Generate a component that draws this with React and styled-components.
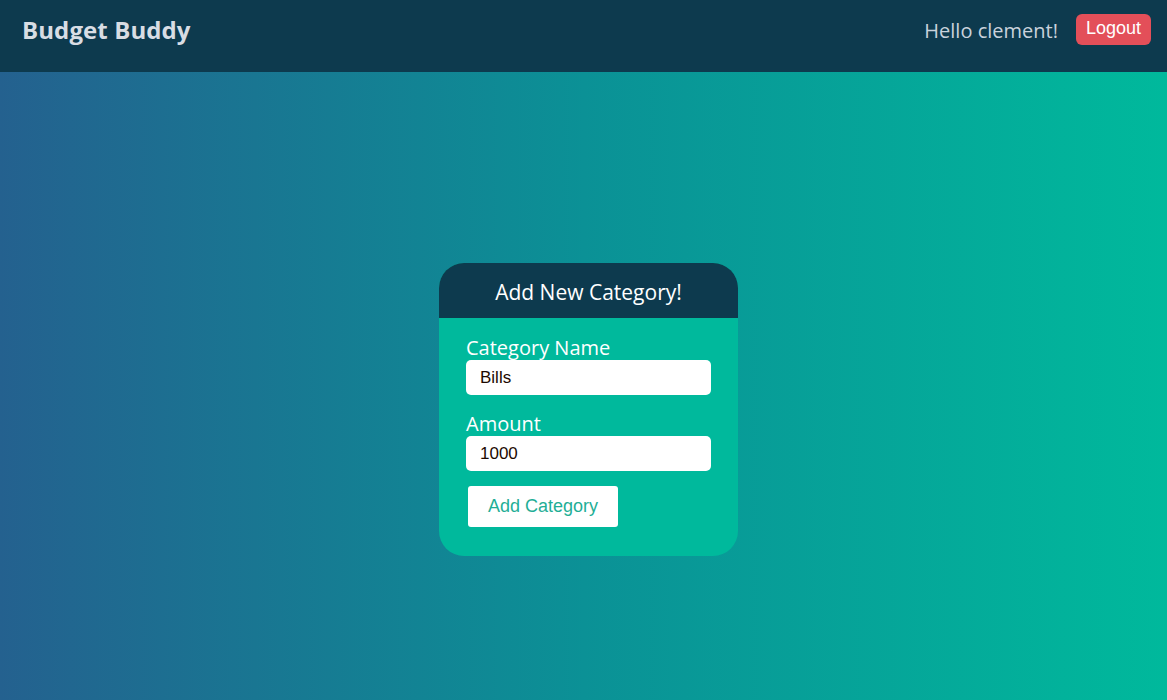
import React from 'react';
import styled, { createGlobalStyle } from 'styled-components';

const GlobalStyle = createGlobalStyle`
  html, body, #root {
    margin: 0;
    height: 100%;
  }
  body {
    font-family: 'Open Sans', 'Noto Sans', sans-serif;
  }
`;

const Page = styled.div`
  display: flex;
  flex-direction: column;
  height: 100%;
`;

const NavBar = styled.nav`
  height: 72px;
  flex-shrink: 0;
  background-color: #0d3a4e;
  display: flex;
  align-items: center;
  justify-content: space-between;
  padding: 0 16px 0 22px;
`;

const Brand = styled.h1`
  margin: 0 0 13px 0;
  font-size: 24px;
  font-weight: 700;
  color: #d8dde4;
  letter-spacing: 0.1px;
`;

const UserArea = styled.div`
  display: flex;
  align-items: center;
  gap: 18px;
  margin-bottom: 13px;
`;

const Greeting = styled.span`
  font-size: 20px;
  color: #c9d2dc;
  margin-top: 2px;
`;

const LogoutButton = styled.button`
  background-color: #e34f59;
  color: #ffffff;
  border: none;
  border-radius: 6px;
  padding: 4px 10px 6px;
  font-family: 'Liberation Sans', Arial, sans-serif;
  font-size: 18px;
  cursor: pointer;
`;

const Main = styled.main`
  flex: 1;
  background: linear-gradient(90deg, #24618f 0%, #0b9196 50%, #00b99c 100%);
  display: flex;
  justify-content: center;
  align-items: flex-start;
  padding-top: 191px;
`;

const Card = styled.div`
  width: 299px;
  margin-left: 10px;
  border-radius: 25px;
  overflow: hidden;
  background-color: #00b99c;
`;

const CardHeader = styled.div`
  height: 55px;
  background-color: #0d3a4e;
  display: flex;
  align-items: center;
  justify-content: center;
`;

const CardTitle = styled.h2`
  margin: 2px 0 0 0;
  font-size: 21px;
  font-weight: 400;
  color: #ffffff;
`;

const Form = styled.form`
  display: flex;
  flex-direction: column;
  padding: 17px 27px 29px;
`;

const Field = styled.div`
  display: flex;
  flex-direction: column;
  margin-bottom: 16px;

  & + button {
    margin-top: -1px;
  }
`;

const Label = styled.label`
  font-size: 20px;
  line-height: 25px;
  color: #ffffff;
`;

const Input = styled.input`
  width: 245px;
  height: 35px;
  box-sizing: border-box;
  border: none;
  border-radius: 5px;
  padding: 0 14px;
  font-family: 'Liberation Sans', Arial, sans-serif;
  font-size: 17px;
  color: #1d0a00;
  background-color: #ffffff;
  outline: none;
`;

const SubmitButton = styled.button`
  align-self: flex-start;
  margin-left: 2px;
  width: 150px;
  height: 41px;
  border: none;
  border-radius: 3px;
  background-color: #ffffff;
  color: #1fae96;
  font-family: 'Liberation Sans', Arial, sans-serif;
  font-size: 18px;
  cursor: pointer;
`;

function App() {
  return (
    <>
      <GlobalStyle />
      <Page>
        <NavBar>
          <Brand>Budget Buddy</Brand>
          <UserArea>
            <Greeting>Hello clement!</Greeting>
            <LogoutButton>Logout</LogoutButton>
          </UserArea>
        </NavBar>
        <Main>
          <Card>
            <CardHeader>
              <CardTitle>Add New Category!</CardTitle>
            </CardHeader>
            <Form onSubmit={(e) => e.preventDefault()}>
              <Field>
                <Label htmlFor="name">Category Name</Label>
                <Input id="name" defaultValue="Bills" />
              </Field>
              <Field>
                <Label htmlFor="amount">Amount</Label>
                <Input id="amount" defaultValue="1000" />
              </Field>
              <SubmitButton type="submit">Add Category</SubmitButton>
            </Form>
          </Card>
        </Main>
      </Page>
    </>
  );
}

export default App;
